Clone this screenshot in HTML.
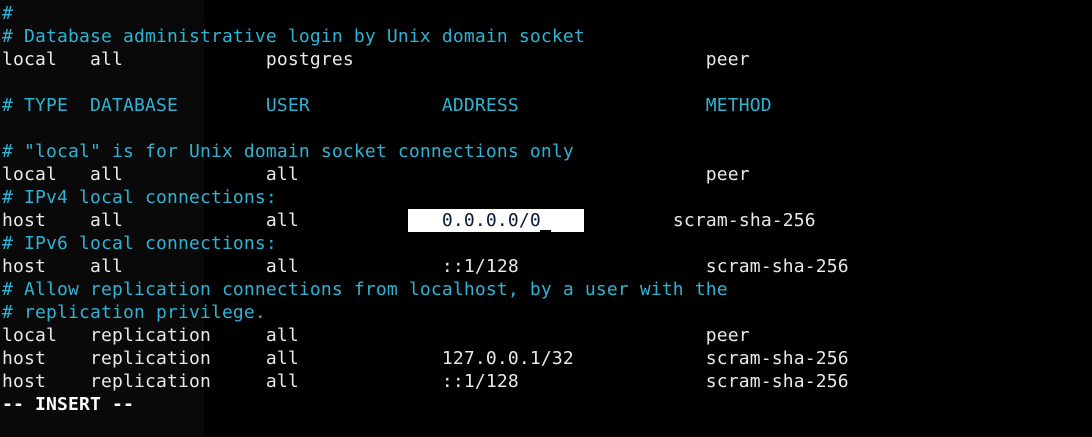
<!DOCTYPE html>
<html><head><style>
html,body{margin:0;padding:0;width:1092px;height:437px;overflow:hidden;background:#000;}
.l{position:absolute;left:0;top:0;width:204px;height:437px;background:#090909;}
pre{position:absolute;left:2px;top:2px;margin:0;font-family:"DejaVu Sans Mono","Liberation Mono",monospace;font-size:18px;letter-spacing:0.16px;line-height:23px;color:#e8e8e8;white-space:pre;}
.c{color:#2fb3d4;}
.hl{position:absolute;left:408px;top:209px;width:176px;height:23px;background:#fff;}
.cur{position:absolute;left:540px;top:230px;width:11px;height:2px;background:#000;}
b{font-weight:bold;color:#fff;}
</style></head><body>
<div class="l"></div>
<div class="hl"></div>
<pre><span class="c">#
# Database administrative login by Unix domain socket</span>
local   all             postgres                                peer

<span class="c"># TYPE  DATABASE        USER            ADDRESS                 METHOD</span>

<span class="c"># "local" is for Unix domain socket connections only</span>
local   all             all                                     peer
<span class="c"># IPv4 local connections:</span>
host    all             all             <span style="color:#0a1a3a">0.0.0.0/0</span>            scram-sha-256
<span class="c"># IPv6 local connections:</span>
host    all             all             ::1/128                 scram-sha-256
<span class="c"># Allow replication connections from localhost, by a user with the
# replication privilege.</span>
local   replication     all                                     peer
host    replication     all             127.0.0.1/32            scram-sha-256
host    replication     all             ::1/128                 scram-sha-256
<b>-- INSERT --</b></pre>
<div class="cur"></div>
</body></html>
